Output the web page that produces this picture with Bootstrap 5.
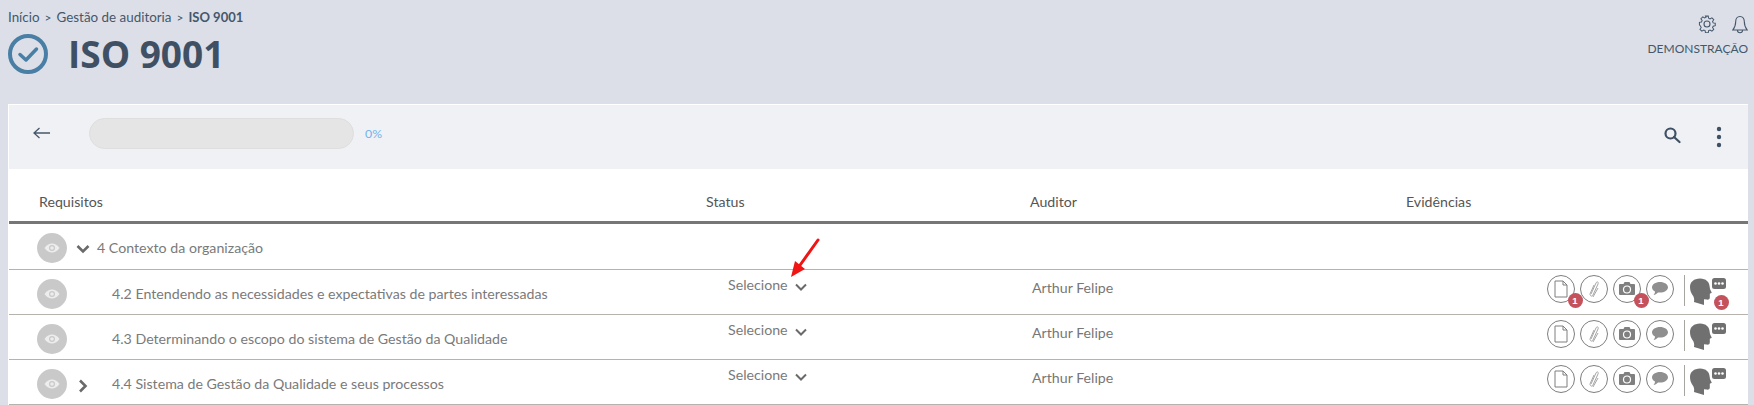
<!DOCTYPE html>
<html lang="pt-BR">
<head>
<meta charset="utf-8">
<title>ISO 9001</title>
<link rel="stylesheet" href="https://cdn.jsdelivr.net/npm/bootstrap@5.3.0/dist/css/bootstrap.min.css">
<style>
html,body{height:405px;overflow:hidden}
body{background:#dcdfe7;font-family:"Lato","Open Sans",sans-serif;font-size:14px;color:#767676}
.top-area{height:104px;padding:0 6px 0 8px}
.crumbs{padding-top:9px;font-size:13.4px;line-height:17px;color:#45576b}
.crumbs .sep{margin:0 5px;font-size:12px}
.crumbs b{font-weight:700;font-size:13px}
.page-title{margin:8px 0 0 0;gap:20px}
.page-title h1{font-family:"Open Sans",sans-serif;font-weight:700;font-size:37px;line-height:40px;color:#3f5064;margin:0}
.user-box{padding-top:15px;color:#45576b;font-size:12px;line-height:17px;text-align:right}
.user-icons{gap:16px;justify-content:flex-end;margin-bottom:5px}
.panel-box{margin:0 6px 0 8px;background:#fff;border-left:1px solid #fff;height:301px}
.panel-bar{height:65px;background:#eff1f5;border-top:1px solid #fff;padding:0 26px 0 24px}
.track{width:265px;height:31px;background:#e5e5e5;border:1px solid #dedede;border-radius:16px;margin-left:38px;margin-top:-8px}
.pct{color:#6fb4ec;font-size:12.3px;margin-left:11px;margin-top:-6px}
.grid-head{height:55px;border-bottom:3px solid #767676;color:#555;font-size:14.2px;padding-top:14px}
.grid-row{height:45px;border-bottom:1px solid #b5b3ac;font-size:14.2px;color:#7a7a7a}
.grid-row.lead-row{height:46px}
.c1{width:697px;flex:none;padding-left:28px;margin-top:4px}
.lead-row .c1{margin-top:2px}
.c1h{width:697px;flex:none;padding-left:30px}
.c2{width:324px;flex:none}
.c3{width:376px;flex:none}
.c4{flex:1}
.eye{width:30px;height:30px;border-radius:50%;background:#c9c9c9;flex:none}
.tog{width:24px;flex:none;text-align:center}
.tog-wide{margin-right:2px}
.req{margin-left:45px}
.req-near{margin-left:17px}
.stat{padding-left:22px;margin-top:-14px}
.aud{padding-left:2px;margin-top:-9px;color:#777}
.tools{padding-right:22px;gap:5px;justify-content:flex-end;margin-top:-4px}
.round-ic{width:28px;height:28px;border:1px solid #7e7e7e;border-radius:50%;background:#fff;position:relative;flex:none}
.cnt{position:absolute;left:19.5px;top:17.5px;width:15px;height:15px;border-radius:50%;background:#c4525c;color:#fff;font-size:9.5px;font-weight:700;line-height:15px;text-align:center;font-family:"Liberation Sans",sans-serif}
.vline{width:1px;height:31px;background:#a7a59f;margin:0 0 0 5px;flex:none}
.headwrap{width:36px;height:30px;position:relative;flex:none}
.cnt.hd{left:23.5px;top:20px}
.arrow-note{position:absolute;left:785px;top:235px}
</style>
</head>
<body>
<svg width="0" height="0" class="d-none">
  <defs>
    <symbol id="i-eye" viewBox="0 0 16 10"><path d="M.5 5C3 1.500 5.500.5 8 .5s5 1 7.500 4.500C13 8.500 10.500 9.500 8 9.500S3 8.500.5 5z" fill="#ededed"/><circle cx="8" cy="5" r="3" fill="#c9c9c9"/><circle cx="8" cy="5" r="1.800" fill="#ededed"/></symbol>
    <symbol id="i-down" viewBox="0 0 12 8"><path d="M1 1.500l5 5 5-5" fill="none" stroke="#6a6a6a" stroke-width="2"/></symbol>
    <symbol id="i-doc" viewBox="0 0 14 18"><path d="M1 1h8l4 4v12H1zM9 1v4h4" fill="#fff" stroke="#7e7e7e"/></symbol>
    <symbol id="i-clip" viewBox="0 0 10 18"><path d="M2 14L7 3c1-2 3-1 2 1L4 15c-1 2-3 1-3-1L5 5M4 17l5-9" fill="none" stroke="#a5a5a5"/></symbol>
    <symbol id="i-cam" viewBox="0 0 16 13"><path d="M1 2h3.500l1-2h5l1 2H15a1 1 0 0 1 1 1v9a1 1 0 0 1-1 1H1a1 1 0 0 1-1-1V3a1 1 0 0 1 1-1z" fill="#808080"/><circle cx="8" cy="7.500" r="3.500" fill="#808080" stroke="#fff" stroke-width="1.200"/></symbol>
    <symbol id="i-talk" viewBox="0 0 16 13"><path d="M8 0c4.400 0 8 2.300 8 5.300s-3.600 5.300-8 5.300c-.7 0-1.400 0-2-.2C5 11.500 3.500 12.600 1.500 13c1-1 1.500-2 1.500-3.400C1.200 8.600 0 7 0 5.300 0 2.300 3.600 0 8 0z" fill="#8f8f8f"/></symbol>
    <symbol id="i-head" viewBox="0 0 36 30"><path d="M10 3.500c6 0 9.500 3.500 9.700 8.500l.3 2 1.800 3.800-2 1v3.700c0 1.800-1.300 2.300-3.300 2.100l-2.500-.3V30L4 27c.5-3 0-5-1.500-7C1 18 0 15 0 12 0 7 4 3.500 10 3.500z" fill="#707070"/><rect x="22" y="3" width="14" height="11" rx="2.500" fill="#707070"/><circle cx="25.500" cy="8.500" r="1.300" fill="#fff"/><circle cx="29" cy="8.500" r="1.300" fill="#fff"/><circle cx="32.500" cy="8.500" r="1.300" fill="#fff"/></symbol>
  </defs>
</svg>

<div class="top-area d-flex justify-content-between">
  <div>
    <div class="crumbs">Início<span class="sep">&gt;</span>Gestão de auditoria<span class="sep">&gt;</span><b>ISO 9001</b></div>
    <div class="page-title d-flex align-items-center">
      <svg width="40" height="40" viewBox="0 0 40 40"><circle cx="20" cy="20" r="18" fill="none" stroke="#4a7fa5" stroke-width="4"/><path d="M12 20.500l6 5.500 10.500-11" fill="none" stroke="#4a7fa5" stroke-width="3.500" stroke-linecap="round" stroke-linejoin="round"/></svg>
      <h1>ISO 9001</h1>
    </div>
  </div>
  <div class="user-box">
    <div class="user-icons d-flex">
      <svg width="18" height="18" viewBox="0 0 18 18" fill="none" stroke="#45576b" stroke-width="1.100"><path d="M7.500 1h3l.4 2.300 1.500.7 2-1.200 2 2-1.300 2 .7 1.500 2.200.4v2.600l-2.200.5-.7 1.500 1.300 1.900-2 2-2-1.200-1.500.6-.4 2.300h-3l-.4-2.300-1.500-.6-2 1.200-2-2 1.300-1.900-.7-1.500L1 10.300V7.700l2.200-.4.700-1.500-1.300-2 2-2 2 1.200 1.500-.7z" transform="translate(.5 .2) scale(.93)"/><circle cx="9" cy="9" r="3"/></svg>
      <svg width="16" height="20" viewBox="0 0 16 20" fill="none" stroke="#45576b" stroke-width="1.100"><path d="M8 1.500c-3 0-4.300 2.300-4.300 5 0 4-1.200 6.500-3 8.500h14.600c-1.800-2-3-4.500-3-8.500 0-2.700-1.300-5-4.300-5zM5.500 15.500c0 3 5 3 5 0"/></svg>
    </div>
    <div>DEMONSTRAÇÃO</div>
  </div>
</div>

<div class="panel-box">
  <div class="panel-bar d-flex align-items-center">
    <svg width="18" height="12" viewBox="0 0 18 12" fill="none" stroke="#45576b" stroke-width="1.300" class="mb-2"><path d="M17 6H1M6.500 1L1 6l5.500 5"/></svg>
    <div class="track"></div>
    <span class="pct">0%</span>
    <svg class="ms-auto mb-1" width="18" height="18" viewBox="0 0 18 18" fill="none" stroke="#3f5064" stroke-width="2.200"><circle cx="7.500" cy="7.500" r="5"/><path d="M11 11l5.500 5" stroke-linecap="round"/></svg>
    <svg style="margin-left:35px" width="6" height="22" viewBox="0 0 6 22" fill="#3f5064"><circle cx="3" cy="3" r="2.200"/><circle cx="3" cy="11" r="2.200"/><circle cx="3" cy="19" r="2.200"/></svg>
  </div>

  <div class="grid-head d-flex align-items-center">
    <div class="c1h">Requisitos</div>
    <div class="c2">Status</div>
    <div class="c3">Auditor</div>
    <div class="c4">Evidências</div>
  </div>

  <div class="grid-row lead-row d-flex align-items-center">
    <div class="c1 d-flex align-items-center">
      <span class="eye d-flex align-items-center justify-content-center"><svg width="16" height="10"><use href="#i-eye"/></svg></span>
      <span class="tog tog-wide ms-1"><svg width="14" height="10" viewBox="0 0 14 10" fill="none" stroke="#6a6a6a" stroke-width="2.600"><path d="M1.500 2L7 7.500 12.500 2"/></svg></span>
      <span>4 Contexto da organização</span>
    </div>
  </div>

  <div class="grid-row d-flex align-items-center">
    <div class="c1 d-flex align-items-center">
      <span class="eye d-flex align-items-center justify-content-center"><svg width="16" height="10"><use href="#i-eye"/></svg></span>
      <span class="req">4.2 Entendendo as necessidades e expectativas de partes interessadas</span>
    </div>
    <div class="c2 stat">Selecione <svg class="ms-1" width="12" height="8"><use href="#i-down"/></svg></div>
    <div class="c3 aud">Arthur Felipe</div>
    <div class="c4 tools d-flex">
      <span class="round-ic d-flex align-items-center justify-content-center"><svg width="14" height="18"><use href="#i-doc"/></svg><span class="cnt">1</span></span>
      <span class="round-ic d-flex align-items-center justify-content-center"><svg width="10" height="18"><use href="#i-clip"/></svg></span>
      <span class="round-ic d-flex align-items-center justify-content-center"><svg width="16" height="13"><use href="#i-cam"/></svg><span class="cnt">1</span></span>
      <span class="round-ic d-flex align-items-center justify-content-center"><svg width="16" height="13"><use href="#i-talk"/></svg></span>
      <span class="vline"></span>
      <span class="headwrap"><svg width="36" height="30"><use href="#i-head"/></svg><span class="cnt hd">1</span></span>
    </div>
  </div>

  <div class="grid-row d-flex align-items-center">
    <div class="c1 d-flex align-items-center">
      <span class="eye d-flex align-items-center justify-content-center"><svg width="16" height="10"><use href="#i-eye"/></svg></span>
      <span class="req">4.3 Determinando o escopo do sistema de Gestão da Qualidade</span>
    </div>
    <div class="c2 stat">Selecione <svg class="ms-1" width="12" height="8"><use href="#i-down"/></svg></div>
    <div class="c3 aud">Arthur Felipe</div>
    <div class="c4 tools d-flex">
      <span class="round-ic d-flex align-items-center justify-content-center"><svg width="14" height="18"><use href="#i-doc"/></svg></span>
      <span class="round-ic d-flex align-items-center justify-content-center"><svg width="10" height="18"><use href="#i-clip"/></svg></span>
      <span class="round-ic d-flex align-items-center justify-content-center"><svg width="16" height="13"><use href="#i-cam"/></svg></span>
      <span class="round-ic d-flex align-items-center justify-content-center"><svg width="16" height="13"><use href="#i-talk"/></svg></span>
      <span class="vline"></span>
      <span class="headwrap"><svg width="36" height="30"><use href="#i-head"/></svg></span>
    </div>
  </div>

  <div class="grid-row d-flex align-items-center">
    <div class="c1 d-flex align-items-center">
      <span class="eye d-flex align-items-center justify-content-center"><svg width="16" height="10"><use href="#i-eye"/></svg></span>
      <span class="tog ms-1"><svg width="10" height="14" viewBox="0 0 10 14" fill="none" stroke="#6a6a6a" stroke-width="2.600"><path d="M2 1.500L7.500 7 2 12.500"/></svg></span>
      <span class="req-near">4.4 Sistema de Gestão da Qualidade e seus processos</span>
    </div>
    <div class="c2 stat">Selecione <svg class="ms-1" width="12" height="8"><use href="#i-down"/></svg></div>
    <div class="c3 aud">Arthur Felipe</div>
    <div class="c4 tools d-flex">
      <span class="round-ic d-flex align-items-center justify-content-center"><svg width="14" height="18"><use href="#i-doc"/></svg></span>
      <span class="round-ic d-flex align-items-center justify-content-center"><svg width="10" height="18"><use href="#i-clip"/></svg></span>
      <span class="round-ic d-flex align-items-center justify-content-center"><svg width="16" height="13"><use href="#i-cam"/></svg></span>
      <span class="round-ic d-flex align-items-center justify-content-center"><svg width="16" height="13"><use href="#i-talk"/></svg></span>
      <span class="vline"></span>
      <span class="headwrap"><svg width="36" height="30"><use href="#i-head"/></svg></span>
    </div>
  </div>
</div>

<svg class="arrow-note" width="40" height="46" viewBox="0 0 40 46"><path d="M33 5L13 33" stroke="#f01414" stroke-width="3" stroke-linecap="round"/><path d="M6 42L10 26 20 34z" fill="#f01414"/></svg>
</body>
</html>
